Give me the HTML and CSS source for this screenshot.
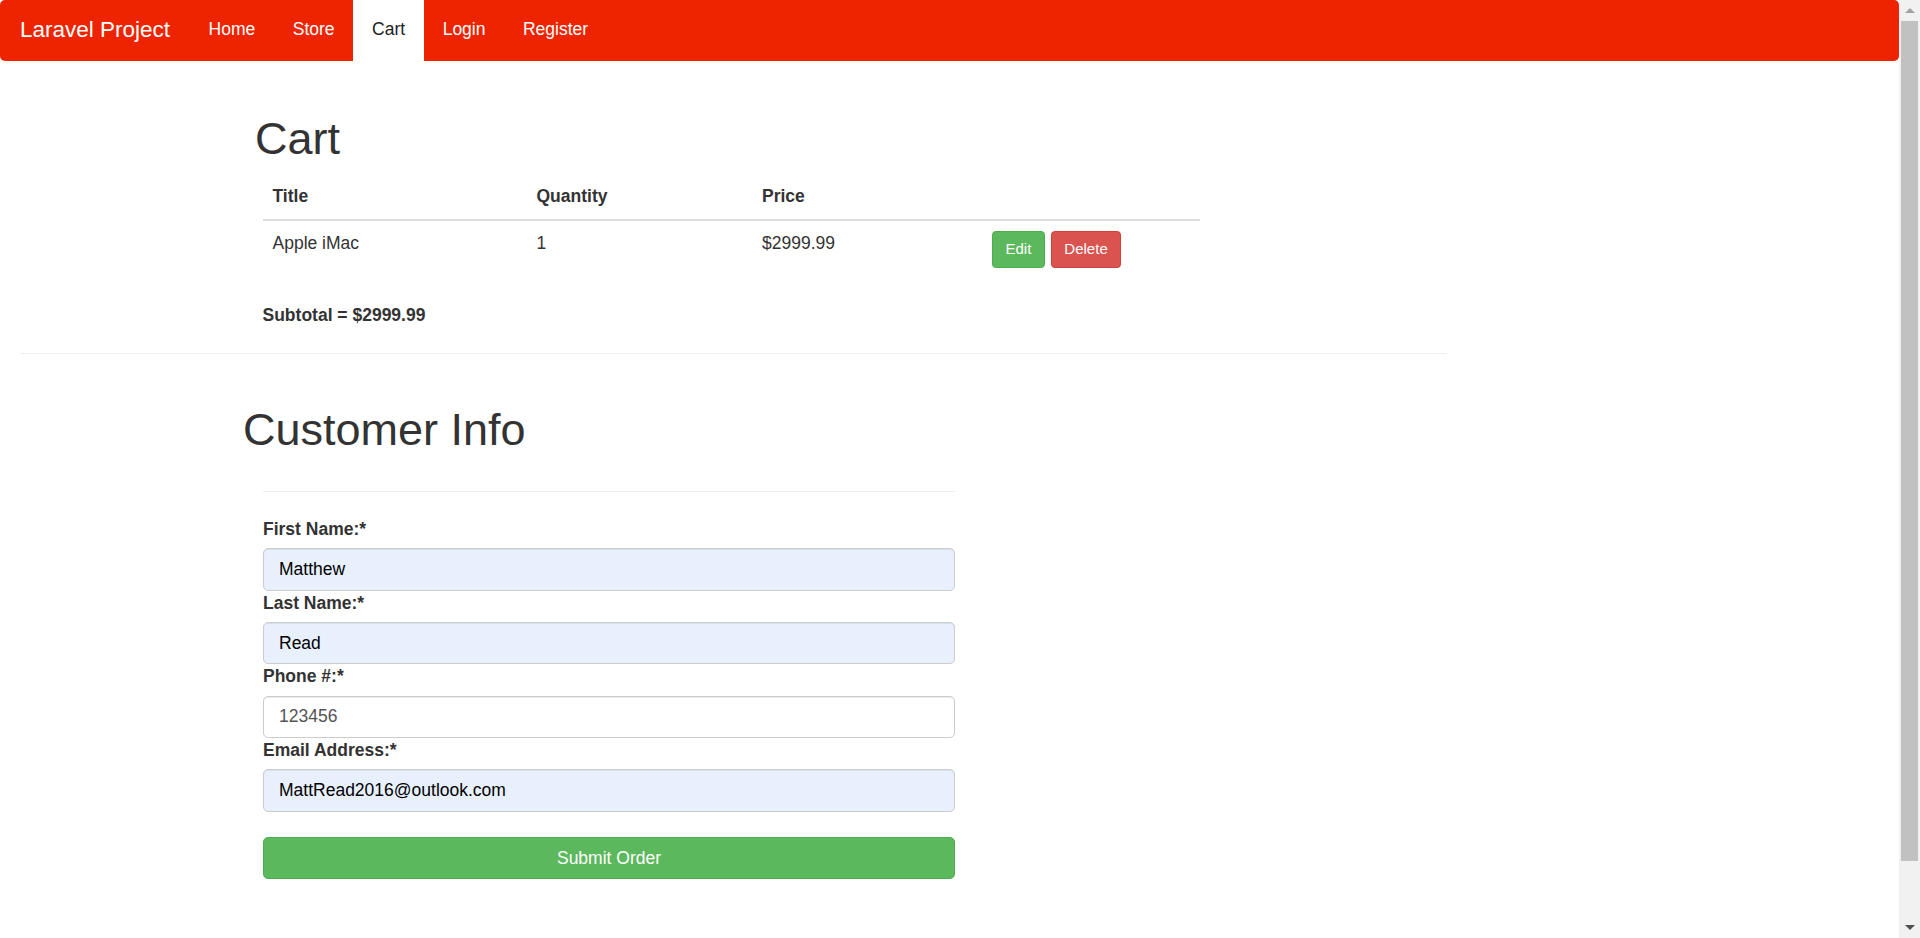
FILE: index.html
```html
<!DOCTYPE html>
<html lang="en">
<head>
<meta charset="utf-8">
<title>Laravel Project - Cart</title>
<link rel="stylesheet" href="styles.css">
</head>
<body>
<div class="page">
  <nav class="navbar">
    <a class="brand" href="#">Laravel Project</a>
    <ul class="nav">
      <li><a href="#">Home</a></li>
      <li><a href="#">Store</a></li>
      <li class="active"><a href="#">Cart</a></li>
      <li><a href="#">Login</a></li>
      <li><a href="#">Register</a></li>
    </ul>
  </nav>

  <h1 class="cart-title">Cart</h1>
  <table class="cart-table">
    <colgroup>
      <col class="c-title">
      <col class="c-qty">
      <col class="c-price">
      <col class="c-actions">
    </colgroup>
    <thead>
      <tr><th>Title</th><th>Quantity</th><th>Price</th><th></th></tr>
    </thead>
    <tbody>
      <tr>
        <td>Apple iMac</td>
        <td>1</td>
        <td>$2999.99</td>
        <td><button class="btn-sm btn-edit">Edit</button><button class="btn-sm btn-delete">Delete</button></td>
      </tr>
    </tbody>
  </table>
  <p class="subtotal">Subtotal = $2999.99</p>
  <hr class="divider">

  <h1 class="customer-title">Customer Info</h1>
  <form class="order-form">
    <hr class="form-hr">
    <label class="field-label">First Name:*</label>
    <input class="field autofill" type="text" value="Matthew">
    <label class="field-label">Last Name:*</label>
    <input class="field autofill" type="text" value="Read">
    <label class="field-label">Phone #:*</label>
    <input class="field" type="text" value="123456">
    <label class="field-label">Email Address:*</label>
    <input class="field autofill" type="text" value="MattRead2016@outlook.com">
    <button type="button" class="submit">Submit Order</button>
  </form>
</div>
<div class="scrollbar">
  <div class="sb-btn"><span class="arrow-up"></span></div>
  <div class="sb-track"><div class="sb-thumb"></div></div>
  <div class="sb-btn"><span class="arrow-down"></span></div>
</div>
</body>
</html>
```
FILE: styles.css
```css
html, body {
  margin: 0;
  height: 938px;
  overflow: hidden;
}

body {
  display: flex;
  font-family: "Liberation Sans", Arial, sans-serif;
  font-size: 17.5px;
  line-height: 25px;
  color: #333;
  background: #fff;
}

.page {
  flex: 1;
  min-width: 0;
}

/* Navbar */
.navbar {
  display: flex;
  height: 61px;
  background: #ee2400;
  border-radius: 5px;
}

.brand {
  padding: 17px 18.75px 0 20px;
  font-size: 22.5px;
  line-height: 25px;
  color: #fff;
  text-decoration: none;
}

.nav {
  display: flex;
  list-style: none;
  margin: 0;
  padding: 0 0 0 1px;
}

.nav a {
  display: block;
  height: 61px;
  box-sizing: border-box;
  padding: 17px 18.75px 0;
  color: #fff;
  text-decoration: none;
}

.nav .active a {
  background: #fff;
  color: #222;
}

/* Headings */
h1 {
  font-size: 45px;
  line-height: 49.5px;
  font-weight: normal;
  color: #333;
}

.cart-title {
  margin: 52.7px 0 11px 255px;
}

/* Table */
.cart-table {
  margin: 0 0 25px 262.5px;
  width: 937.5px;
  border-collapse: collapse;
  table-layout: fixed;
}

.c-title { width: 264px; }
.c-qty { width: 225.5px; }
.c-price { width: 230px; }
.c-actions { width: 218px; }

.cart-table th,
.cart-table td {
  padding: 10px;
  text-align: left;
  vertical-align: top;
}

.cart-table th {
  font-weight: bold;
  border-bottom: 2px solid #ddd;
}

.btn-sm {
  display: inline-block;
  padding: 6.25px 12.5px;
  font-family: "Liberation Sans", Arial, sans-serif;
  font-size: 15px;
  line-height: 22.5px;
  border: 1px solid;
  border-radius: 3.75px;
  color: #fff;
  cursor: pointer;
}

.btn-edit {
  background: #5cb85c;
  border-color: #4cae4c;
}

.btn-delete {
  margin-left: 6px;
  background: #d9534f;
  border-color: #d43f3a;
}

.subtotal {
  margin: 0 0 0 262.5px;
  font-weight: bold;
}

.divider {
  margin: 25px 0 0 19.6px;
  width: 1427px;
  height: 0;
  border: 0;
  border-top: 1px solid #eee;
}

.customer-title {
  margin: 51px 0 0 243px;
}

/* Form */
.order-form {
  margin: 0 0 0 263px;
  width: 692px;
}

.form-hr {
  margin: 36.3px 0 25px;
  height: 0;
  border: 0;
  border-top: 1px solid #eee;
}

.field-label {
  display: block;
  margin-bottom: 6.25px;
  font-weight: bold;
}

.field {
  display: block;
  width: 100%;
  height: 42.5px;
  box-sizing: border-box;
  padding: 7.5px 15px;
  font-family: "Liberation Sans", Arial, sans-serif;
  font-size: 17.5px;
  line-height: 25px;
  color: #555;
  background: #fff;
  border: 1px solid #ccc;
  border-radius: 5px;
  box-shadow: inset 0 1px 1px rgba(0, 0, 0, .075);
  outline: none;
}

.field.autofill {
  background: #e8f0fe;
  color: #000;
}

.submit {
  display: block;
  width: 100%;
  height: 42.5px;
  margin-top: 25px;
  font-family: "Liberation Sans", Arial, sans-serif;
  font-size: 17.5px;
  color: #fff;
  background: #5cb85c;
  border: 1px solid #4cae4c;
  border-radius: 5px;
  cursor: pointer;
}

/* Fake scrollbar */
.scrollbar {
  width: 21px;
  height: 938px;
  display: flex;
  flex-direction: column;
  background: #f1f1f1;
}

.sb-btn {
  height: 21px;
  display: flex;
  align-items: center;
  justify-content: center;
}

.arrow-up {
  width: 0;
  height: 0;
  border-left: 5px solid transparent;
  border-right: 5px solid transparent;
  border-bottom: 5px solid #a3a3a3;
}

.arrow-down {
  width: 0;
  height: 0;
  border-left: 5px solid transparent;
  border-right: 5px solid transparent;
  border-top: 5px solid #505050;
}

.sb-track {
  flex: 1;
  padding: 0 2px;
}

.sb-thumb {
  height: 840px;
  background: #c1c1c1;
}
```
